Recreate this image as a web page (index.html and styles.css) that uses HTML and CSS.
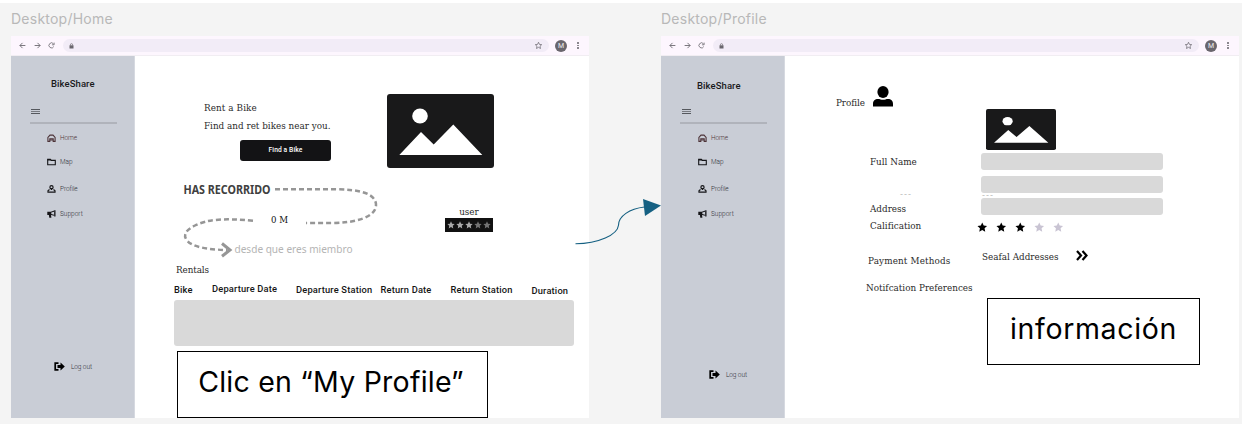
FILE: index.html
```html
<!DOCTYPE html>
<html lang="es">
<head>
<meta charset="utf-8">
<title>BikeShare</title>
<link rel="stylesheet" href="styles.css">
</head>
<body>
<svg class="defs" width="0" height="0">
  <symbol id="back" viewBox="0 0 8 8"><path d="M7.300 4H1M4 1L1 4l3 3" fill="none" stroke="currentColor"/></symbol>
  <symbol id="fwd" viewBox="0 0 8 8"><path d="M.7 4H7M4 1l3 3-3 3" fill="none" stroke="currentColor"/></symbol>
  <symbol id="reload" viewBox="0 0 8 8"><path d="M6.600 5.200A2.900 2.900 0 1 1 6.300 2.100M7 .7v2.500H4.500" fill="none" stroke="currentColor" stroke-width=".9"/></symbol>
  <symbol id="lock" viewBox="0 0 6 7"><path d="M.6 2.700h4.800v3.800H.6z" fill="currentColor"/><path d="M1.700 3V2a1.300 1.300 0 0 1 2.600 0v1" fill="none" stroke="currentColor" stroke-width=".8"/></symbol>
  <symbol id="star" viewBox="0 0 24 24"><path d="M12 1l3.300 7.200 7.700.9-5.700 5.300 1.500 7.800L12 18.300l-6.800 3.900 1.500-7.800L1 9.100l7.700-.9z"/></symbol>
  <symbol id="home" viewBox="0 0 9 8"><path d="M.9 7.400V3.500L3 1.100h3l2.100 2.400v3.900H6.200V4.700H2.800v2.700zM2.800 6h3.400" fill="none" stroke="currentColor" stroke-width="1.100"/></symbol>
  <symbol id="map" viewBox="0 0 9 7"><path d="M.7 6.200V.9h2.700l.9 1h4v4.300z" fill="none" stroke="currentColor" stroke-width="1.100"/><path d="M.5.500h3l1 1.500h-4z" fill="currentColor"/></symbol>
  <symbol id="person" viewBox="0 0 9 8"><circle cx="4.500" cy="2.300" r="1.600" fill="none" stroke="currentColor" stroke-width="1.200"/><path d="M4.500 3v2M2.500 4.600L1 5.700v1.500h7V5.700L6.500 4.600" fill="none" stroke="currentColor" stroke-width="1.200"/></symbol>
  <symbol id="horn" viewBox="0 0 9 8"><path d="M.3 1.700h3.500L7.200.5v5.300L4 4.900l.4 2.800H2.300L1.900 5H.3z"/><path d="M7.200.3h1.300v6.200H7.200z"/><path d="M4.300 2.600l2.700-.9v3l-2.700-.7z" fill="#c9cdd6"/></symbol>
  <symbol id="exit" viewBox="0 0 11 9"><path d="M4.500 1.100H1.200v6.800h3.300" fill="none" stroke="currentColor" stroke-width="1.700"/><path d="M3.500 3h3V.5l4.300 4-4.300 4V6h-3z"/></symbol>
  <symbol id="picture" viewBox="0 0 107 74" preserveAspectRatio="none"><rect width="107" height="74" rx="3" fill="#19191a"/><ellipse cx="33" cy="22" rx="7.800" ry="7.500" fill="#fff"/><path d="M12.300 61L34 38l12.700 12.500L66.300 30.500 95.300 61z" fill="#fff"/></symbol>
</svg>
<main class="canvas">
  <article class="board">
    <h2 class="board-name">Desktop/Home</h2>
    <section class="window">
      <header class="browser">
        <svg class="nav"><use href="#back"/></svg><svg class="nav"><use href="#fwd"/></svg><svg class="nav"><use href="#reload"/></svg>
        <div class="url"><svg class="lock"><use href="#lock"/></svg><svg class="fav"><use href="#star"/></svg></div>
        <span class="avatar">M</span><span class="dots"><i></i><i></i><i></i></span>
      </header>
      <div class="body">
        <aside class="side">
          <h1 class="brand">BikeShare</h1>
          <div class="burger"></div>
          <hr class="rule">
          <nav class="menu">
            <a class="item brown"><svg><use href="#home"/></svg>Home</a>
            <a class="item"><svg><use href="#map"/></svg>Map</a>
            <a class="item"><svg><use href="#person"/></svg>Profile</a>
            <a class="item"><svg><use href="#horn"/></svg>Support</a>
          </nav>
          <a class="logout"><svg><use href="#exit"/></svg>Log out</a>
        </aside>
        <div class="content home">
          <div class="hero">
            <div class="hero-text">
              <p class="slab rent">Rent a Bike</p>
              <p class="slab find">Find and ret bikes near you.</p>
              <button class="cta">Find a Bike</button>
            </div>
            <svg class="hero-pic"><use href="#picture"/></svg>
          </div>
          <div class="stats">
            <svg class="route" width="205" height="84" viewBox="178 178 205 84">
              <g fill="none" stroke="#969696" stroke-width="2.500">
                <path stroke-dasharray="5 3" d="M275 189.300h60C358 189.300 376 193 376 205c0 12-20 18-45 18h-25"/>
                <path stroke-dasharray="5 3" d="M253 220.800C225 218 208 219 195 225.500c-10 5-12 10-8 15 5 6 18 9 40 9.500"/>
                <path stroke-width="3" d="M222 243.500l8 6.500-8 6.300"/>
              </g>
              <text class="done" x="183.500" y="193.500" textLength="87" lengthAdjust="spacingAndGlyphs">HAS RECORRIDO</text>
              <text class="dist" x="271" y="222.800" textLength="17" lengthAdjust="spacingAndGlyphs">0 M</text>
              <text class="since" x="234.500" y="252.600" textLength="118" lengthAdjust="spacingAndGlyphs">desde que eres miembro</text>
            </svg>
            <div class="user">
              <span class="slab user-name">user</span>
              <div class="score"><svg><use href="#star"/></svg><svg><use href="#star"/></svg><svg><use href="#star"/></svg><svg class="off"><use href="#star"/></svg><svg class="off"><use href="#star"/></svg></div>
            </div>
          </div>
          <h3 class="slab rentals">Rentals</h3>
          <div class="heads"><span>Bike</span><span class="up">Departure Date</span><span>Departure Station</span><span>Return Date</span><span>Return Station</span><span class="down">Duration</span></div>
          <div class="table"></div>
        </div>
      </div>
    </section>
  </article>
  <article class="board">
    <h2 class="board-name second">Desktop/Profile</h2>
    <section class="window">
      <header class="browser">
        <svg class="nav"><use href="#back"/></svg><svg class="nav"><use href="#fwd"/></svg><svg class="nav"><use href="#reload"/></svg>
        <div class="url"><svg class="lock"><use href="#lock"/></svg><svg class="fav"><use href="#star"/></svg></div>
        <span class="avatar">M</span><span class="dots"><i></i><i></i><i></i></span>
      </header>
      <div class="body">
        <aside class="side lower">
          <h1 class="brand">BikeShare</h1>
          <div class="burger"></div>
          <hr class="rule">
          <nav class="menu">
            <a class="item brown"><svg><use href="#home"/></svg>Home</a>
            <a class="item"><svg><use href="#map"/></svg>Map</a>
            <a class="item"><svg><use href="#person"/></svg>Profile</a>
            <a class="item"><svg><use href="#horn"/></svg>Support</a>
          </nav>
          <a class="logout"><svg><use href="#exit"/></svg>Log out</a>
        </aside>
        <div class="content profile">
          <div class="heading"><span class="slab">Profile</span>
            <svg class="head-icon" viewBox="0 0 20 21"><ellipse cx="10" cy="6" rx="5.600" ry="5.900"/><path d="M0 20.500v-2.500c0-3.500 2-5 5-5 2 0 3 .8 5 .8s3-.8 5-.8c3 0 5 1.500 5 5v2.500z"/></svg>
          </div>
          <div class="form">
            <div class="labels">
              <span class="slab l-name">Full Name</span>
              <span class="dash">---</span>
              <span class="slab l-addr">Address</span>
              <span class="slab l-cal">Calification</span>
              <span class="slab l-pay">Payment Methods</span>
              <span class="slab l-not">Notifcation Preferences</span>
            </div>
            <div class="fields">
              <svg class="photo"><use href="#picture"/></svg>
              <div class="field"></div>
              <div class="field second-field"></div>
              <span class="dash in-field">---</span>
              <div class="field"></div>
              <div class="rating"><svg><use href="#star"/></svg><svg><use href="#star"/></svg><svg><use href="#star"/></svg><svg class="pale"><use href="#star"/></svg><svg class="pale"><use href="#star"/></svg></div>
              <div class="saved"><span class="slab l-saved">Seafal Addresses</span><svg class="more" viewBox="0 0 12 11"><path d="M1 1l4 4.500L1 10M6.500 1l4 4.500-4 4.500" fill="none" stroke="#000" stroke-width="2.200"/></svg></div>
            </div>
          </div>
        </div>
      </div>
    </section>
  </article>
  <svg class="connector" width="90" height="52" viewBox="574 196 90 52"><path d="M575.500 243.700c23 0 42-9 43-18.500 0-9 11-16.500 26-18.200" fill="none" stroke="#156082" stroke-width="1.100"/><path d="M643 199l18 6.500-16 10.500z" fill="#156082"/></svg>
  <div class="note click"><span>Clic en “My Profile”</span></div>
  <div class="note info"><span>información</span></div>
</main>
</body>
</html>
```
FILE: styles.css
```css
* { box-sizing: border-box; }
body { margin: 0; background: #f4f4f4; }
h1, h2, h3, p { margin: 0; font-weight: 400; }
svg { display: block; flex: none; fill: currentColor; }
.defs { position: absolute; }

.canvas { position: relative; display: flex; gap: 72px; width: 1242px; height: 424px; padding: 7px 0 0 11px; border-top: 3px solid #fff; overflow: hidden; }
.board { width: 578px; flex: none; }
.board-name { height: 26px; font: 14px/17px Inter, sans-serif; color: #b8b8b8; letter-spacing: .24px; white-space: nowrap; }
.window { height: 382px; background: #fff; }

.browser { display: flex; align-items: center; height: 20px; padding: 0 9px 0 8px; background: #fdf6fe; color: #69666d; border-bottom: 1px solid #f1edf2; }
.nav { width: 7px; height: 7px; margin-right: 7.500px; }
.url { display: flex; align-items: center; justify-content: space-between; flex: 1; height: 13px; padding: 0 7px 0 6px; border-radius: 7px; background: #f2ecf7; }
.lock { width: 5px; height: 6px; }
.fav { width: 7px; height: 7px; fill: none; stroke: #69666d; stroke-width: 2.500px; }
.avatar { width: 12px; height: 12px; margin: 0 10px 0 6px; border-radius: 50%; background: #69666d; color: #eee; font: 7px/12px Roboto, sans-serif; text-align: center; }
.dots { display: grid; gap: 1px; width: 3px; }
.dots i { width: 1.500px; height: 1.500px; background: #8a878e; }

.body { display: flex; height: 362px; }
.side { width: 124px; padding: 19px 0 0 19px; background: #c9cdd6; border-right: 1px solid #d6d9e0; }
.brand { height: 34px; padding-left: 21px; font: 500 9.500px/18px Roboto, sans-serif; letter-spacing: .08px; color: #1a1a1c; }
.burger { width: 9px; height: 5px; margin-left: 1px; border-top: 1px solid #55585e; border-bottom: 1px solid #55585e; background: linear-gradient(transparent 1px, #777a80 1px, #777a80 2px, transparent 2px); }
.rule { height: 2px; margin: 8px 0 0; width: 87px; border: 0; background: #b0b3bb; }
.menu { display: grid; grid-template-rows: 20px 28px 25px 26px; align-items: center; padding: 4px 0 0 17px; }
.item, .logout { display: flex; align-items: center; gap: 4px; font: 300 6.500px/8px Roboto, sans-serif; letter-spacing: -.1px; color: #303136; }
.item svg { width: 9px; height: 8px; color: #151518; }
.item:nth-child(4) { letter-spacing: 0; }
.brown, .brown svg { color: #4d3338; }
.logout { gap: 6px; margin: 135px 0 0 24px; }
.logout svg { width: 11px; height: 9px; color: #000; }
.lower .brand { padding-top: 2px; padding-left: 17px; }
.lower .logout { margin: 143px 0 0 29px; }
.lower .burger { margin-left: 2px; }
.lower .menu { padding-left: 18px; }

.slab { font-family: "DejaVu Serif Condensed", "DejaVu Serif", serif; font-stretch: condensed; font-size: 9.800px; line-height: 12px; color: #2a2a2a; white-space: nowrap; }
.home { width: 454px; }
.hero { display: flex; height: 122px; padding-left: 69px; }
.hero-text { width: 183px; padding-top: 46px; }
.rent { letter-spacing: .1px; }
.find { margin-top: 6px; }
.cta { display: block; width: 91px; height: 21px; margin: 8px 0 0 36px; padding: 0; border: 0; border-radius: 3px; background: #131315; color: #fff; font: 500 6.700px/21px Roboto, sans-serif; letter-spacing: .1px; }
.hero-pic { width: 107px; height: 74px; margin-top: 38px; }
.stats { display: flex; height: 84px; padding-left: 43px; }
.done { font: 700 11.800px "Noto Sans", sans-serif; fill: #404040; }
.dist { font: 10px "DejaVu Serif", serif; fill: #111; }
.since { font: 400 11.500px "Noto Sans", sans-serif; fill: #b4b4b4; }
.user { width: 48px; margin: 28px 0 0 62px; text-align: center; line-height: 12px; }
.user-name { display: block; }
.score { display: flex; justify-content: center; align-items: center; gap: 1px; height: 14px; background: #111; color: #aaa; }
.score svg { width: 8px; height: 8px; }
.score .off { color: #737373; }
.rentals { padding: 2px 0 0 41px; letter-spacing: -.1px; }
.heads { display: grid; grid-template-columns: 38px 84px 84.500px 70px 81px 50px; height: 24px; padding: 8px 0 0 39px; font: 500 9.300px/12px Roboto, sans-serif; letter-spacing: .18px; color: #161616; white-space: nowrap; }
.up { margin-top: -1px; }
.down { margin-top: 1px; }
.table { width: 400px; height: 46px; margin: 0 0 0 39px; border-radius: 3px; background: #d9d9d9; }

.heading { display: flex; align-items: flex-end; gap: 8px; height: 52px; padding-left: 51px; }
.head-icon { width: 20px; height: 21px; margin-bottom: 1px; }
.heading .slab { margin-bottom: -1px; letter-spacing: -.1px; }
.form { display: flex; padding-left: 85px; }
.labels { display: flex; flex-direction: column; width: 111px; padding-top: 48px; }
.l-addr { margin-top: 7px; }
.dash { height: 4px; margin: 24px 0 0 30px; font: 9px/4px "Liberation Sans", sans-serif; letter-spacing: 1px; color: #bbb; }
.l-cal { margin-top: 5px; }
.l-pay { margin: 23px 0 0 -2px; letter-spacing: .15px; }
.l-not { margin: 15px 0 0 -4px; }
.fields { display: flex; flex-direction: column; }
.photo { width: 70px; height: 41px; margin: 1px 0 3px 5px; }
.field { width: 182px; height: 17px; border-radius: 3px; background: #d9d9d9; }
.second-field { margin-top: 6px; }
.in-field { margin: 0 0 1px 1px; }
.rating { display: flex; gap: 8.500px; margin: 7px 0 0 -4px; color: #000; }
.rating svg { width: 10.500px; height: 10.500px; }
.rating .pale { color: #c9c4d3; }
.saved { display: flex; align-items: center; gap: 17px; height: 12px; margin: 18.500px 0 0 1px; }
.more { width: 12px; height: 11px; margin-top: -3px; }

.connector { position: absolute; left: 574px; top: 193px; }
.note { position: absolute; display: flex; align-items: center; justify-content: center; height: 67px; border: 1px solid #000; background: #fff; color: #000; font: 28.500px/34px Inter, sans-serif; white-space: nowrap; }
.note span { margin-top: -6px; }
.click { left: 177px; top: 348px; width: 311px; letter-spacing: .22px; }
.click span { margin-left: -3px; }
.info { left: 987px; top: 295px; width: 213px; letter-spacing: .65px; }
```
